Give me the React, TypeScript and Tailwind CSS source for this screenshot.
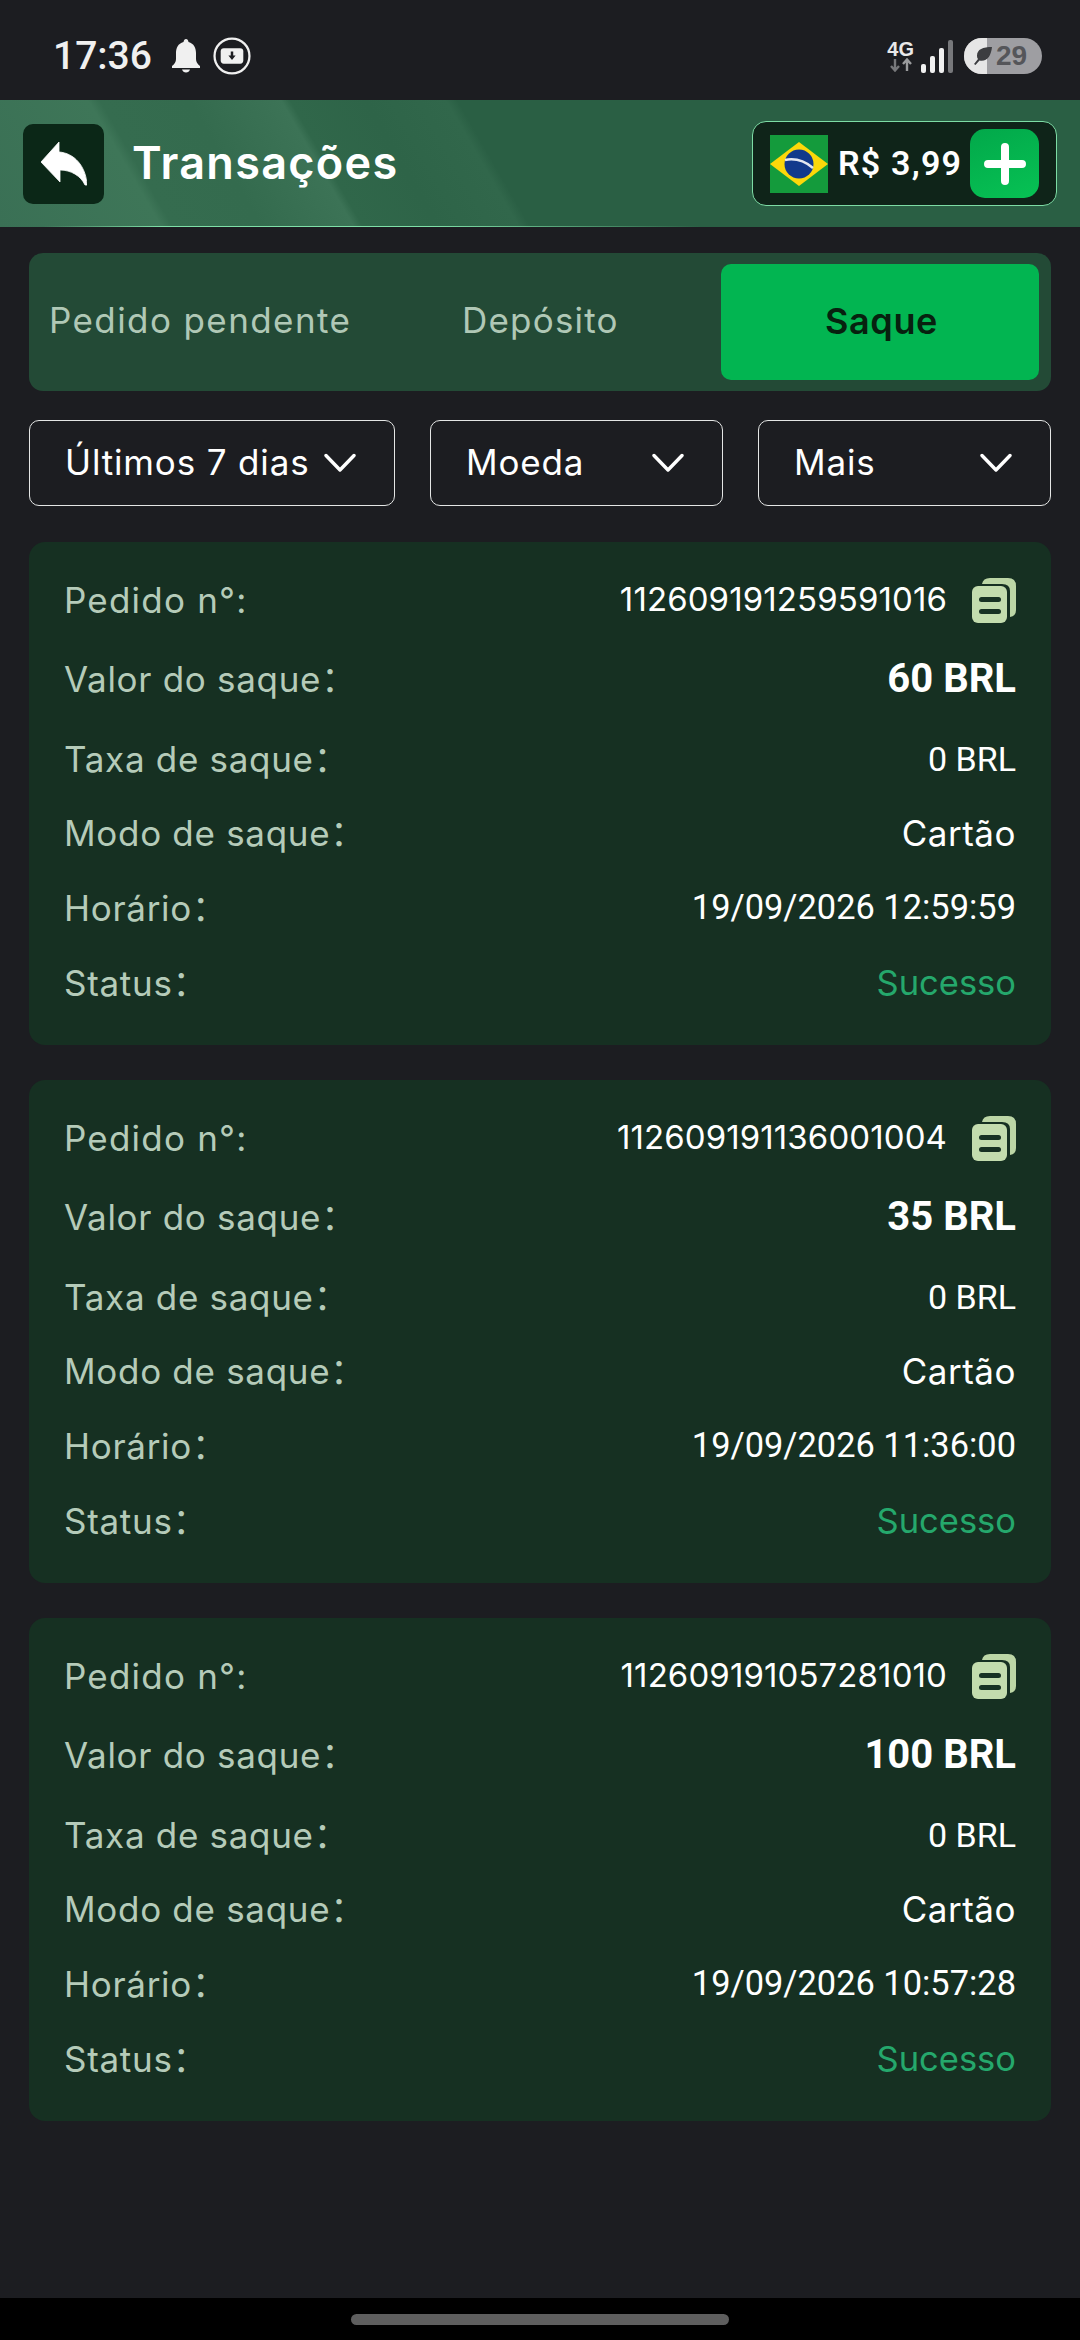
import React from "react";

const sans = "font-['Inter','Noto_Sans_CJK_SC','Liberation_Sans',sans-serif]";
const rob = "font-['Roboto','Liberation_Sans',sans-serif]";

function Chevron() {
  return (
    <svg width="32" height="20" viewBox="0 0 32 20" fill="none" className="shrink-0">
      <path d="M2 2.5 L16 17 L30 2.5" stroke="#fff" strokeWidth="3.4" strokeLinecap="round" strokeLinejoin="round" />
    </svg>
  );
}

function CopyIcon() {
  return (
    <svg width="44" height="46" viewBox="0 0 44 46" className="shrink-0">
      <path d="M10 7 Q11 1 18 1 H36 Q44 1 44 9 V33 Q44 39 38 40 V14 Q38 7 30 7 Z" fill="#bcd6a6" />
      <rect x="0" y="9" width="35" height="37" rx="6" fill="#c3dcae" />
      <rect x="7" y="20" width="22" height="5" rx="2.5" fill="#173123" />
      <rect x="7" y="32" width="22" height="5" rx="2.5" fill="#173123" />
    </svg>
  );
}

function Row({ label, value, cls, mt, copy }: { label: string; value: string; cls: string; mt: string; copy?: boolean }) {
  return (
    <div className={`flex h-[40px] items-center justify-between ${mt}`}>
      <span className={`${sans} text-[35px] text-[#b5cbb9] ${copy ? "tracking-[1.2px]" : "tracking-[0.7px]"}`}>{label}</span>
      <span className="flex items-center gap-[25px]">
        <span className={cls}>{value}</span>
        {copy && <CopyIcon />}
      </span>
    </div>
  );
}

function Card({ id, amount, time }: { id: string; amount: string; time: string }) {
  return (
    <div className="h-[503px] rounded-[16px] bg-[#163022] px-[35px] pt-[38px]">
      <Row label="Pedido n°:" value={id} mt="" copy cls={`${sans} text-[33px] tracking-[0.1px] text-white`} />
      <Row label="Valor do saque：" value={amount} mt="mt-[39px]" cls={`${rob} text-[40px] font-bold text-white`} />
      <Row label="Taxa de saque：" value="0 BRL" mt="mt-[40px]" cls={`${rob} text-[34px] text-white`} />
      <Row label="Modo de saque：" value="Cartão" mt="mt-[34px]" cls={`${sans} text-[35px] tracking-[0.5px] text-white`} />
      <Row label="Horário：" value={time} mt="mt-[35px]" cls={`${rob} text-[34.4px] text-white`} />
      <Row label="Status：" value="Sucesso" mt="mt-[35px]" cls={`${sans} text-[34.5px] text-[#25a86c]`} />
    </div>
  );
}

function Filter({ label, w }: { label: string; w: string }) {
  return (
    <div className={`flex h-[86px] ${w} items-center justify-between rounded-[10px] border-[1.5px] border-[#e4e6e5] pl-[35px] pr-[38px]`}>
      <span className={`${sans} pb-[2px] text-[35px] tracking-[0.85px] text-white`}>{label}</span>
      <Chevron />
    </div>
  );
}

export default function App() {
  return (
    <div className="flex h-[2340px] w-[1080px] flex-col overflow-hidden bg-[#1c1d21]">
      {/* status bar */}
      <div className="flex h-[100px] shrink-0 items-center justify-between pl-[53px] pr-[38px] pt-[12px]">
        <div className="flex items-center">
          <span className={`${rob} text-[39px] font-medium leading-none text-[#f0f0f0]`}>17:36</span>
          <svg width="28" height="34" viewBox="0 0 28 34" className="ml-[20px]">
            <path d="M14 0 Q16 0 16.5 3 C22 4.5 24 9 24 14 V20 Q24 24 28 27 V29 H0 V27 Q4 24 4 20 V14 C4 9 6 4.5 11.5 3 Q12 0 14 0 Z" fill="#f0f0f0" />
            <path d="M10 30.5 H18 Q17 33.5 14 33.5 Q11 33.5 10 30.5 Z" fill="#f0f0f0" />
          </svg>
          <svg width="38" height="38" viewBox="0 0 37 37" className="ml-[13px]">
            <circle cx="18.5" cy="18.5" r="17" fill="none" stroke="#f0f0f0" strokeWidth="2.2" />
            <rect x="7.5" y="11" width="22" height="15" rx="3" fill="#f0f0f0" />
            <path d="M17.3 14 H19.7 V18 H22 L18.5 22.5 L15 18 H17.3 Z" fill="#1c1d21" />
          </svg>
        </div>
        <div className="flex items-center">
          <div className="flex flex-col items-center">
            <span className="font-['Liberation_Sans',sans-serif] text-[20px] font-bold leading-[18px] text-[#e8e8e8]">4G</span>
            <svg width="24" height="14" viewBox="0 0 24 14">
              <path d="M6 1 V12 M2 8 L6 12.5 L10 8" stroke="#77787b" strokeWidth="2.4" fill="none" />
              <path d="M18 13 V2 M14 6 L18 1.5 L22 6" stroke="#9a9b9d" strokeWidth="2.4" fill="none" />
            </svg>
          </div>
          <svg width="32" height="33" viewBox="0 0 32 33" className="ml-[7px]">
            <rect x="0" y="24" width="5" height="9" rx="2" fill="#f0f0f0" />
            <rect x="9" y="16" width="5" height="17" rx="2" fill="#f0f0f0" />
            <rect x="18" y="8" width="5" height="25" rx="2" fill="#f0f0f0" />
            <rect x="27" y="0" width="5" height="33" rx="2" fill="#77787b" />
          </svg>
          <div className="relative ml-[11px] flex h-[36px] w-[78px] items-center overflow-hidden rounded-full bg-[#9e9ea2]">
            <div className="h-full w-[23px] bg-[#e6e6e6]" />
            <svg width="20" height="20" viewBox="0 0 20 20" className="absolute left-[9px] top-[8px]">
              <path d="M19 1 C10 1 4 3 4 10 Q4 12 5 13 L1 18 L2.5 19 L6.5 14.5 C14 16 18 10 19 1 Z" fill="#3c3d40" />
            </svg>
            <span className="font-['Liberation_Sans',sans-serif] absolute left-[32px] text-[28px] font-bold leading-none text-[#55565a]">29</span>
          </div>
        </div>
      </div>

      {/* header */}
      <div className="relative flex h-[127px] shrink-0 items-center justify-between bg-[linear-gradient(60deg,#3a7055_0%,#3e7658_14%,#356c4f_15%,#346b4e_22.7%,#3c7356_30.7%,#30674a_31.5%,#2e6448_38%,#31674b_45%,#2a5f44_46%,#2a5f44_100%)] px-[23px]">
        <div className="flex items-center">
          <div className="flex h-[80px] w-[81px] items-center justify-center rounded-[10px] bg-[#0b2717]">
            <svg width="46" height="44" viewBox="0 0 46 44">
              <path d="M0 20 L18 0 V10 C33 11 45 24 46 43 L44 43 C40 34 30 28 19 28 V40 Z" fill="#fff" stroke="#fff" strokeWidth="0.8" strokeLinejoin="round" />
            </svg>
          </div>
          <span className={`${sans} ml-[28px] pb-[2px] text-[45px] font-semibold tracking-[1.3px] text-white`}>Transações</span>
        </div>
        <div className="flex h-[85px] w-[305px] items-center rounded-[14px] border border-[#7ddca5] bg-[#0f2419] pl-[17px]">
          <svg width="58" height="58" viewBox="0 0 58 58" className="shrink-0">
            <rect width="58" height="58" fill="#149b3c" />
            <path d="M29 7 L58 29 L29 51 L0 29 Z" fill="#fcd80a" />
            <circle cx="29" cy="29" r="14.5" fill="#123a8c" />
            <path d="M15 25 Q30 22 43 33" stroke="#e4e8f0" strokeWidth="2.5" fill="none" />
          </svg>
          <span className={`${rob} ml-[10px] w-[122px] whitespace-nowrap text-[34px] font-semibold tracking-[1.2px] text-white`}>R$ 3,99</span>
          <div className="ml-[10px] flex h-[69px] w-[69px] shrink-0 items-center justify-center rounded-[15px] bg-[linear-gradient(160deg,#02a84a,#07c254)]">
            <svg width="42" height="42" viewBox="0 0 42 42">
              <path d="M21 4 V38 M4 21 H38" stroke="#fff" strokeWidth="8" strokeLinecap="round" />
            </svg>
          </div>
        </div>
        <div className="absolute bottom-0 left-0 h-[1px] w-full bg-[linear-gradient(90deg,transparent_4%,#7fe0a8_15%,#7fe0a8_40%,transparent_65%)]" />
      </div>

      {/* main */}
      <div className="flex flex-col px-[29px] pt-[26px]">
        <div className="flex h-[138px] items-center rounded-[14px] bg-[#234a36] pl-[20px] pr-[12px]">
          <span className={`${sans} w-[413px] whitespace-nowrap pb-[3px] text-[35px] tracking-[1.4px] text-[#b0c8b6]`}>Pedido pendente</span>
          <span className={`${sans} pb-[3px] text-[35px] tracking-[1.2px] text-[#b0c8b6]`}>Depósito</span>
          <div className={`${sans} ml-auto flex h-[116px] w-[318px] items-center justify-center rounded-[10px] bg-[#02b551] pb-[2px] pl-[3px] text-[36px] font-semibold tracking-[0.6px] text-[#07210f]`}>Saque</div>
        </div>
        <div className="mt-[29px] flex justify-between">
          <Filter label="Últimos 7 dias" w="w-[366px]" />
          <Filter label="Moeda" w="w-[293px]" />
          <Filter label="Mais" w="w-[293px]" />
        </div>
        <div className="mt-[36px] flex flex-col gap-[35px]">
          <Card id="112609191259591016" amount="60 BRL" time="19/09/2026 12:59:59" />
          <Card id="112609191136001004" amount="35 BRL" time="19/09/2026 11:36:00" />
          <Card id="112609191057281010" amount="100 BRL" time="19/09/2026 10:57:28" />
        </div>
      </div>

      {/* nav */}
      <div className="mt-auto flex h-[42px] shrink-0 justify-center bg-black pt-[16px]">
        <div className="h-[11px] w-[378px] rounded-full bg-[#5e5e5e]" />
      </div>
    </div>
  );
}
